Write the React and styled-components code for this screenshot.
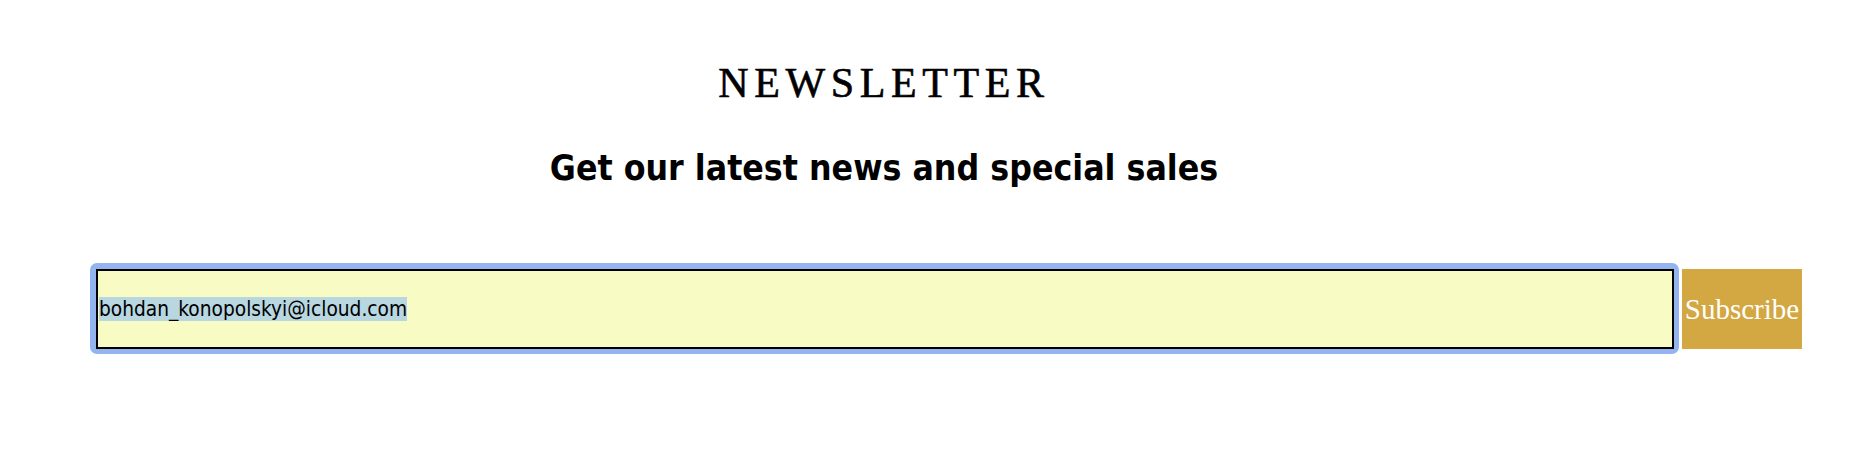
import React, { useEffect, useRef } from 'react'
import styled, { createGlobalStyle } from 'styled-components'

const GlobalStyle = createGlobalStyle`
    html, body {
        margin: 0;
        padding: 0;
        background: #ffffff;
    }
`;

const Seccion = styled.section`
    width: 100%;
    padding-top: 62px;
    box-sizing: border-box;
`;

const Cabecera = styled.header`
    display: flex;
    flex-direction: column;
    align-items: center;
    padding-right: 108px;
`;

const Titulo = styled.h2`
    margin: 0;
    font-family: "Liberation Serif", serif;
    font-weight: 400;
    font-size: 42px;
    line-height: 42px;
    letter-spacing: 5.6px;
    -webkit-text-stroke: 0.6px #000;
    color: #000;
`;

const Subtitulo = styled.p`
    margin: 42px 0 0;
    font-family: "DejaVu Sans", sans-serif;
    font-stretch: condensed;
    font-weight: 700;
    font-size: 35.3px;
    line-height: 44px;
    color: #000;
`;

const Formulario = styled.form`
    display: flex;
    align-items: center;
    gap: 3px;
    margin-top: 73px;
    padding: 0 74px 0 90px;
`;

const Anillo = styled.div`
    flex: 1;
    display: flex;
    padding: 6px 5px 5px 6px;
    border-radius: 7px;
    background: ${props => props.focused ? '#93b4f0' : 'transparent'};
`;

const Campo = styled.input`
    flex: 1;
    height: 80px;
    box-sizing: border-box;
    margin: 0;
    padding: 1px 1px;
    border: 2px solid #000;
    border-radius: 0;
    outline: none;
    background: #f9fbc5;
    font-family: "DejaVu Sans", sans-serif;
    font-stretch: condensed;
    font-size: 20.7px;
    color: #000;

    &::selection {
        background: #b8d7e1;
        color: #000;
    }
`;

const Boton = styled.button`
    width: 120px;
    height: 80px;
    margin-top: 1px;
    padding: 0;
    border: none;
    background: #d3a742;
    color: #fff;
    font-family: "Liberation Serif", serif;
    font-size: 29px;
    cursor: pointer;
`;

const App = () => {
    const campo = useRef(null);

    useEffect(() => {
        campo.current.focus();
        campo.current.select();
    }, []);

    return (
        <>
            <GlobalStyle />
            <Seccion>
                <Cabecera>
                    <Titulo>NEWSLETTER</Titulo>
                    <Subtitulo>Get our latest news and special sales</Subtitulo>
                </Cabecera>
                <Formulario onSubmit={e => e.preventDefault()}>
                    <Anillo focused>
                        <Campo ref={campo} type="email" defaultValue="bohdan_konopolskyi@icloud.com" />
                    </Anillo>
                    <Boton type="submit">Subscribe</Boton>
                </Formulario>
            </Seccion>
        </>
    )
}

export default App
